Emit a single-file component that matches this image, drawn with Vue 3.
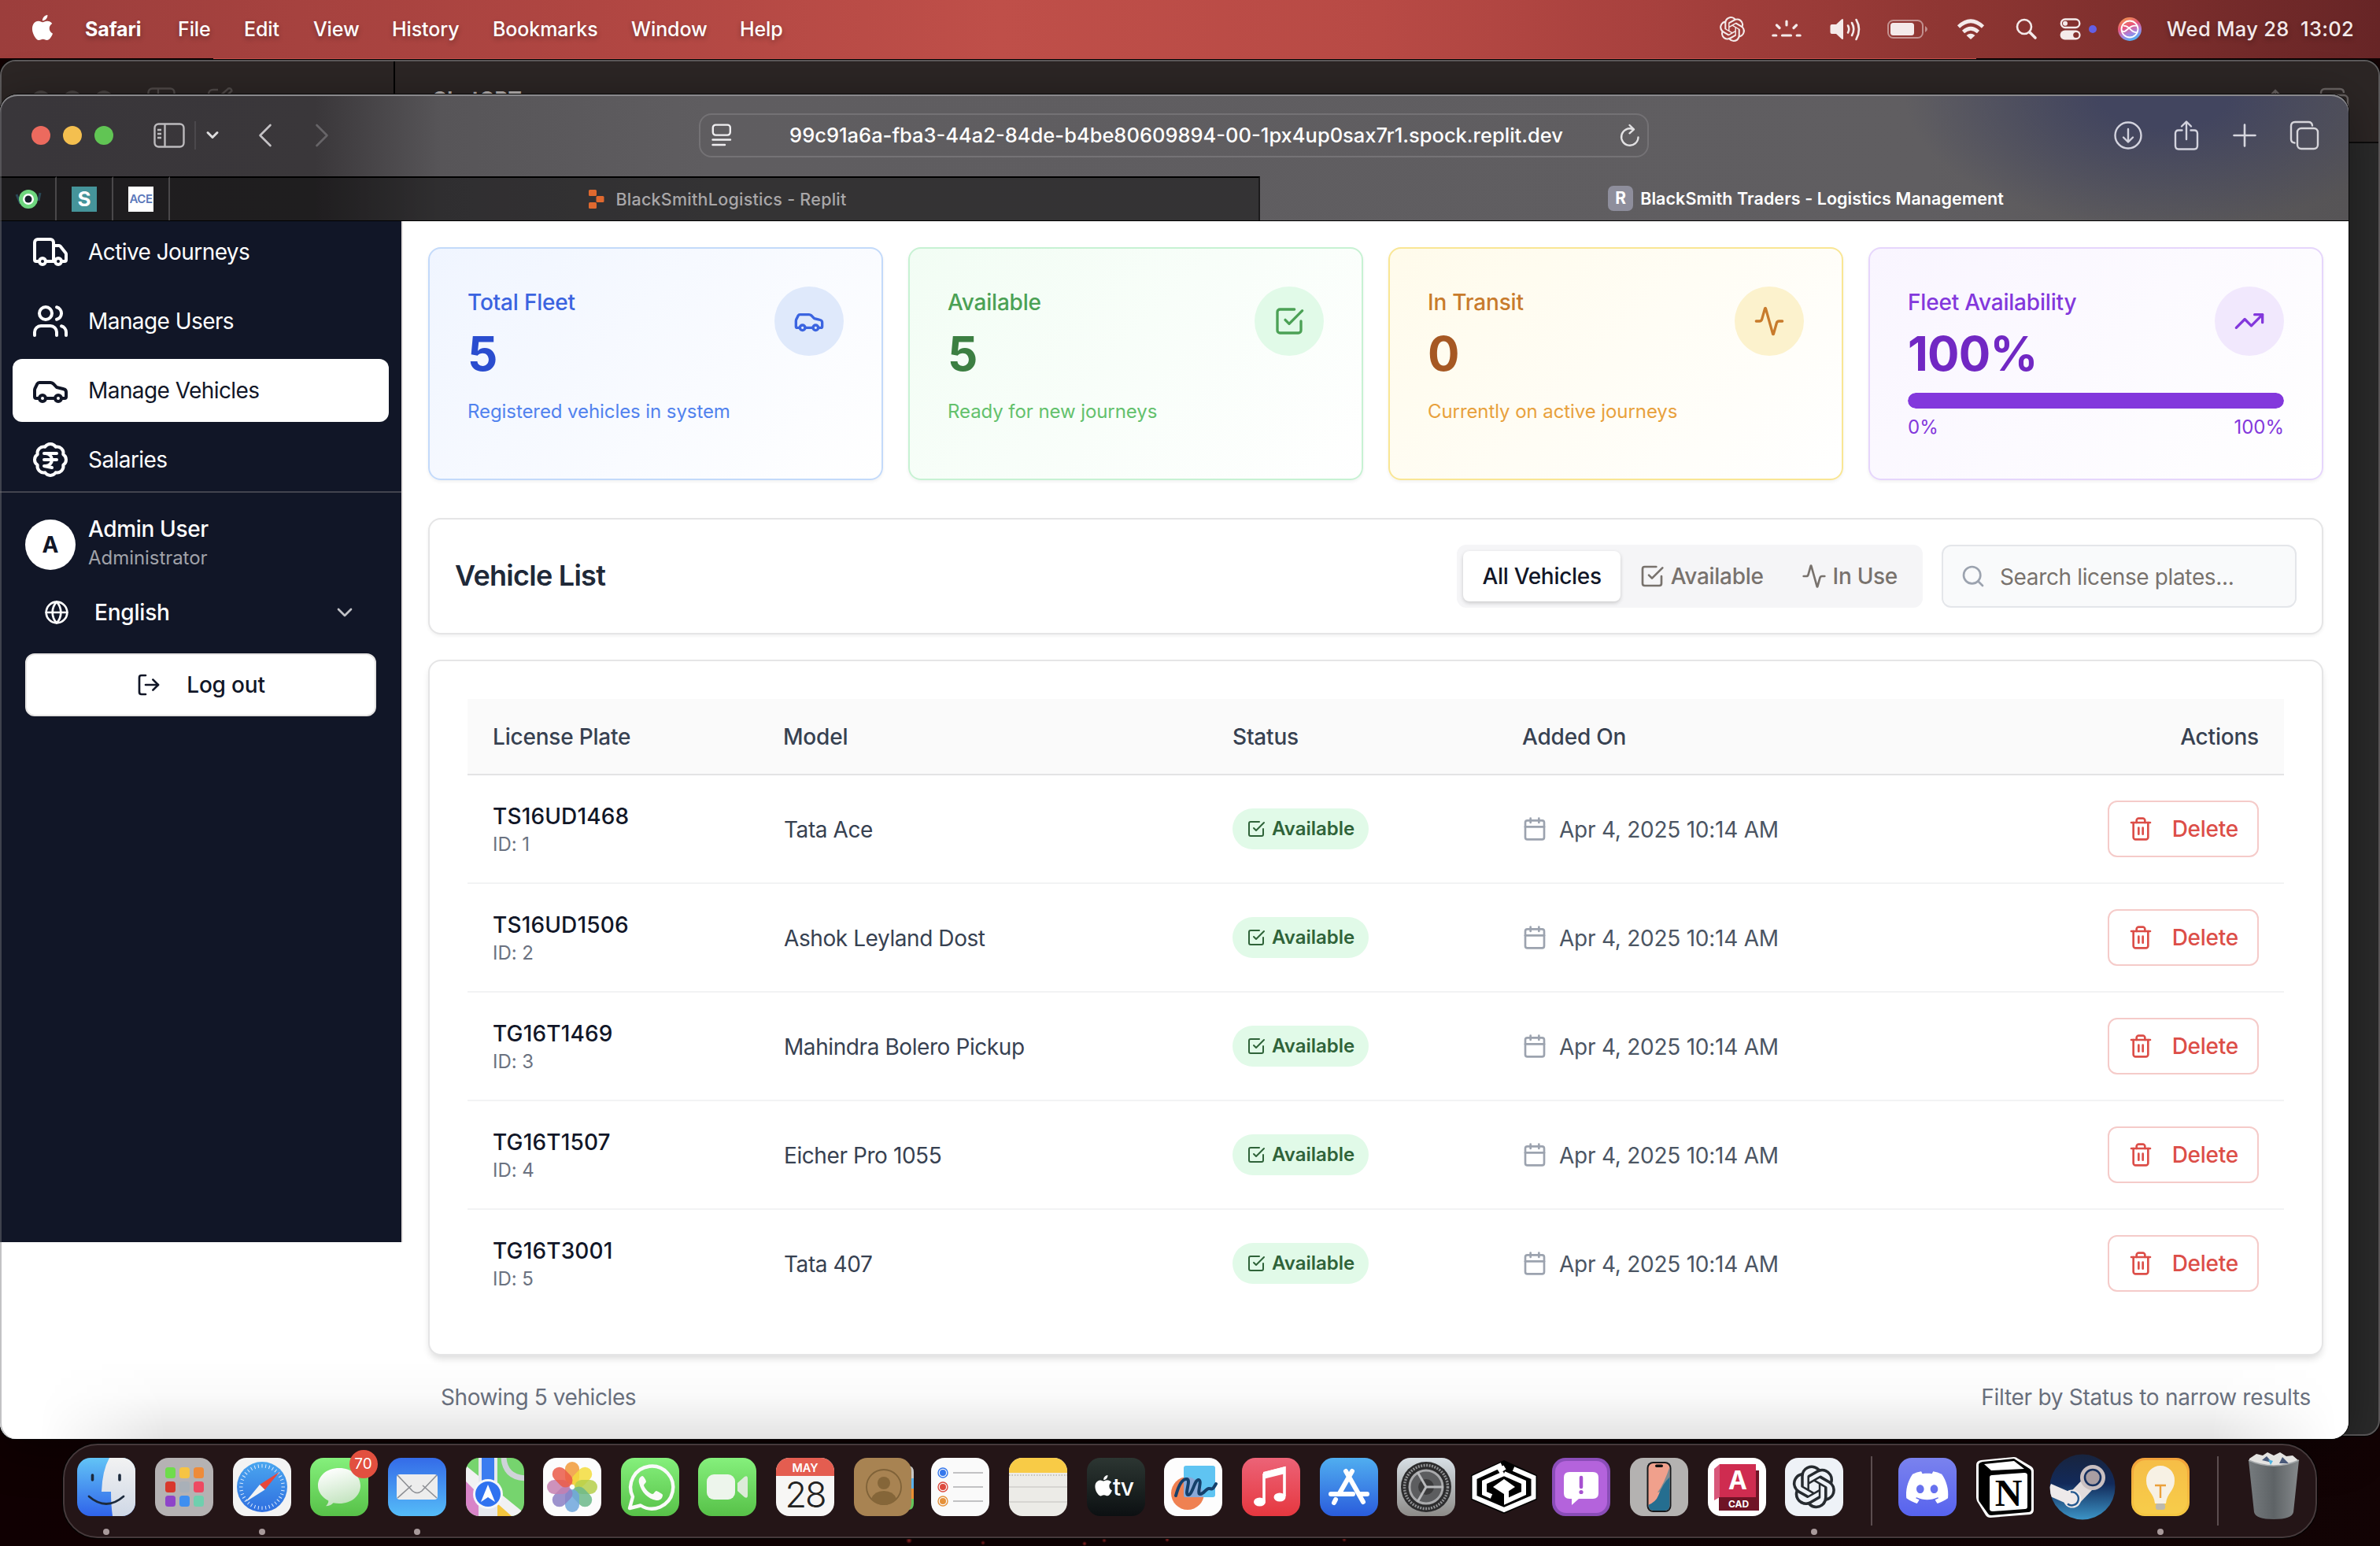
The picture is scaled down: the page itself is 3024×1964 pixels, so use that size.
<script setup>
import { h } from 'vue'

const circle = (x, y, r) => `M${x - r} ${y}a${r} ${r} 0 1 0 ${2 * r} 0a${r} ${r} 0 1 0 ${-2 * r} 0`

const iconPaths = {
  truck: ['M14 18V6a2 2 0 0 0-2-2H4a2 2 0 0 0-2 2v11a1 1 0 0 0 1 1h2', 'M15 18H9', 'M19 18h2a1 1 0 0 0 1-1v-3.65a1 1 0 0 0-.22-.624l-3.48-4.35A1 1 0 0 0 17.52 8H14', circle(17, 18, 2), circle(7, 18, 2)],
  users: ['M16 21v-2a4 4 0 0 0-4-4H6a4 4 0 0 0-4 4v2', circle(9, 7, 4), 'M22 21v-2a4 4 0 0 0-3-3.87', 'M16 3.13a4 4 0 0 1 0 7.75'],
  car: ['M19 17h2c.6 0 1-.4 1-1v-3c0-.9-.7-1.7-1.5-1.9C18.7 10.6 16 10 16 10s-1.3-1.4-2.2-2.3c-.5-.4-1.1-.7-1.8-.7H5c-.6 0-1.1.4-1.4.9l-1.4 2.9A3.7 3.7 0 0 0 2 12v4c0 .6.4 1 1 1h2', circle(7, 17, 2), 'M9 17h6', circle(17, 17, 2)],
  rupee: ['M3.85 8.62a4 4 0 0 1 4.78-4.77 4 4 0 0 1 6.74 0 4 4 0 0 1 4.78 4.78 4 4 0 0 1 0 6.74 4 4 0 0 1-4.77 4.78 4 4 0 0 1-6.75 0 4 4 0 0 1-4.78-4.77 4 4 0 0 1 0-6.76Z', 'M8 8h8', 'M8 12h8', 'm13 17-5-1h1a4 4 0 0 0 0-8'],
  globe: [circle(12, 12, 10), 'M12 2a14.5 14.5 0 0 0 0 20 14.5 14.5 0 0 0 0-20', 'M2 12h20'],
  chevron: ['m6 9 6 6 6-6'],
  logout: ['M9 21H5a2 2 0 0 1-2-2V5a2 2 0 0 1 2-2h4', 'M16 17l5-5-5-5', 'M21 12H9'],
  check: ['m9 11 3 3L22 4', 'M21 12v7a2 2 0 0 1-2 2H5a2 2 0 0 1-2-2V5a2 2 0 0 1 2-2h11'],
  activity: ['M22 12h-2.48a2 2 0 0 0-1.93 1.46l-2.35 8.36a.25.25 0 0 1-.48 0L9.24 2.18a.25.25 0 0 0-.48 0l-2.35 8.36A2 2 0 0 1 4.49 12H2'],
  trending: ['M22 7l-8.5 8.5-5-5L2 17', 'M16 7h6v6'],
  search: [circle(11, 11, 8), 'm21 21-4.3-4.3'],
  calendar: ['M8 2v4', 'M16 2v4', 'M5 4h14a2 2 0 0 1 2 2v14a2 2 0 0 1-2 2H5a2 2 0 0 1-2-2V6a2 2 0 0 1 2-2z', 'M3 10h18'],
  trash: ['M3 6h18', 'M19 6v14c0 1-1 2-2 2H7c-1 0-2-1-2-2V6', 'M8 6V4c0-1 1-2 2-2h4c1 0 2 1 2 2v2', 'M10 11v6', 'M14 11v6']
}

const LineIcon = (props) =>
  h('svg', {
    width: props.size, height: props.size, viewBox: '0 0 24 24', fill: 'none',
    stroke: 'currentColor', 'stroke-width': 2, 'stroke-linecap': 'round', 'stroke-linejoin': 'round'
  }, iconPaths[props.name].map((d) => h('path', { d })))
LineIcon.props = ['name', 'size']

const openai = 'M22.2819 9.8211a5.9847 5.9847 0 0 0-.5157-4.9108 6.0462 6.0462 0 0 0-6.5098-2.9A6.0651 6.0651 0 0 0 4.9807 4.1818a5.9847 5.9847 0 0 0-3.9977 2.9 6.0462 6.0462 0 0 0 .7427 7.0966 5.98 5.98 0 0 0 .511 4.9107 6.051 6.051 0 0 0 6.5146 2.9001A5.9847 5.9847 0 0 0 13.2599 24a6.0557 6.0557 0 0 0 5.7718-4.2058 5.9894 5.9894 0 0 0 3.9977-2.9001 6.0557 6.0557 0 0 0-.7475-7.0729zm-9.022 12.6081a4.4755 4.4755 0 0 1-2.8764-1.0408l.1419-.0804 4.7783-2.7582a.7948.7948 0 0 0 .3927-.6813v-6.7369l2.02 1.1686a.071.071 0 0 1 .038.052v5.5826a4.504 4.504 0 0 1-4.4945 4.4944zm-9.6607-4.1254a4.4708 4.4708 0 0 1-.5346-3.0137l.142.0852 4.783 2.7582a.7712.7712 0 0 0 .7806 0l5.8428-3.3685v2.3324a.0804.0804 0 0 1-.0332.0615L9.74 19.9502a4.4992 4.4992 0 0 1-6.1408-1.6464zM2.3408 7.8956a4.485 4.485 0 0 1 2.3655-1.9728V11.6a.7664.7664 0 0 0 .3879.6765l5.8144 3.3543-2.0201 1.1685a.0757.0757 0 0 1-.071 0l-4.8303-2.7865A4.504 4.504 0 0 1 2.3408 7.872zm16.5963 3.8558L13.1038 8.364 15.1192 7.2a.0757.0757 0 0 1 .071 0l4.8303 2.7913a4.4944 4.4944 0 0 1-.6765 8.1042v-5.6772a.79.79 0 0 0-.407-.667zm2.0107-3.0231l-.142-.0852-4.7735-2.7818a.7759.7759 0 0 0-.7854 0L9.409 9.2297V6.8974a.0662.0662 0 0 1 .0284-.0615l4.8303-2.7866a4.4992 4.4992 0 0 1 6.6802 4.66zM8.3065 12.863l-2.02-1.1638a.0804.0804 0 0 1-.038-.0567V6.0742a4.4992 4.4992 0 0 1 7.3757-3.4537l-.142.0805L8.704 5.459a.7948.7948 0 0 0-.3927.6813zm1.0976-2.3654l2.602-1.4998 2.6069 1.4998v2.9994l-2.5974 1.4997-2.6067-1.4997Z'
const apple = 'M12.152 6.896c-.948 0-2.415-1.078-3.96-1.04-2.04.027-3.91 1.183-4.961 3.014-2.117 3.675-.546 9.103 1.519 12.09 1.013 1.454 2.208 3.09 3.792 3.039 1.52-.065 2.09-.987 3.935-.987 1.831 0 2.35.987 3.96.948 1.637-.026 2.676-1.48 3.676-2.948 1.156-1.688 1.636-3.325 1.662-3.415-.039-.013-3.182-1.221-3.22-4.857-.026-3.04 2.48-4.494 2.597-4.559-1.429-2.09-3.623-2.324-4.39-2.376-2-.156-3.675 1.09-4.61 1.09zM15.53 3.83c.843-1.012 1.4-2.427 1.245-3.83-1.207.052-2.662.805-3.532 1.818-.78.896-1.454 2.338-1.273 3.714 1.338.104 2.715-.688 3.559-1.701'
const discord = 'M20.317 4.3698a19.7913 19.7913 0 00-4.8851-1.5152.0741.0741 0 00-.0785.0371c-.211.3753-.4447.8648-.6083 1.2495-1.8447-.2762-3.68-.2762-5.4868 0-.1636-.3933-.4058-.8742-.6177-1.2495a.077.077 0 00-.0785-.037 19.7363 19.7363 0 00-4.8852 1.515.0699.0699 0 00-.0321.0277C.5334 9.0458-.319 13.5799.0992 18.0578a.0824.0824 0 00.0312.0561c2.0528 1.5076 4.0413 2.4228 5.9929 3.0294a.0777.0777 0 00.0842-.0276c.4616-.6304.8731-1.2952 1.226-1.9942a.076.076 0 00-.0416-.1057c-.6528-.2476-1.2743-.5495-1.8722-.8923a.077.077 0 01-.0076-.1277c.1258-.0943.2517-.1923.3718-.2914a.0743.0743 0 01.0776-.0105c3.9278 1.7933 8.18 1.7933 12.0614 0a.0739.0739 0 01.0785.0095c.1202.099.246.1981.3728.2924a.077.077 0 01-.0066.1276 12.2986 12.2986 0 01-1.873.8914.0766.0766 0 00-.0407.1067c.3604.698.7719 1.3628 1.225 1.9932a.076.076 0 00.0842.0286c1.961-.6067 3.9495-1.5219 6.0023-3.0294a.077.077 0 00.0313-.0552c.5004-5.177-.8382-9.6739-3.5485-13.6604a.061.061 0 00-.0312-.0286zM8.02 15.3312c-1.1825 0-2.1569-1.0857-2.1569-2.419 0-1.3332.9555-2.4189 2.157-2.4189 1.2108 0 2.1757 1.0952 2.1568 2.419 0 1.3332-.9555 2.4189-2.1569 2.4189zm7.9748 0c-1.1825 0-2.1569-1.0857-2.1569-2.419 0-1.3332.9554-2.4189 2.1569-2.4189 1.2108 0 2.1757 1.0952 2.1568 2.419 0 1.3332-.946 2.4189-2.1568 2.4189Z'

const menus = [
  { label: 'File', width: 84 }, { label: 'Edit', width: 88 }, { label: 'View', width: 100 },
  { label: 'History', width: 128 }, { label: 'Bookmarks', width: 176 }, { label: 'Window', width: 138 }, { label: 'Help', width: 60 }
]

const nav = [
  { label: 'Active Journeys', icon: 'truck' },
  { label: 'Manage Users', icon: 'users' },
  { label: 'Manage Vehicles', icon: 'car', active: true },
  { label: 'Salaries', icon: 'rupee' }
]

const stats = [
  { tone: 'blue', label: 'Total Fleet', value: '5', note: 'Registered vehicles in system', icon: 'car' },
  { tone: 'green', label: 'Available', value: '5', note: 'Ready for new journeys', icon: 'check' },
  { tone: 'amber', label: 'In Transit', value: '0', note: 'Currently on active journeys', icon: 'activity' },
  { tone: 'purple', label: 'Fleet Availability', value: '100%', progress: 100, icon: 'trending' }
]

const vehicles = [
  { id: 1, plate: 'TS16UD1468', model: 'Tata Ace' },
  { id: 2, plate: 'TS16UD1506', model: 'Ashok Leyland Dost' },
  { id: 3, plate: 'TG16T1469', model: 'Mahindra Bolero Pickup' },
  { id: 4, plate: 'TG16T1507', model: 'Eicher Pro 1055' },
  { id: 5, plate: 'TG16T3001', model: 'Tata 407' }
]

const launchpad = ['#6fdc4c', '#f6c444', '#ee8b3a', '#d8382c', '#a9b0b8', '#ee4a62', '#8e44c9', '#3f8ff0', '#6fcfae']
const petals = ['#f19a38', '#f3dc3c', '#b5cf4a', '#6cb98a', '#6fa6dc', '#8b7fc4', '#c47fb0', '#ea5a48']
const spokes = [0, 1, 2]
const ticks = Array.from({ length: 36 }, (_, i) => i * 10)
</script>

<template>
  <div class="screen">
    <header class="menubar">
      <svg class="apple" width="32" height="32" viewBox="0 0 24 24" fill="#fff"><path :d="apple" /></svg>
      <b class="app-name">Safari</b>
      <span v-for="m in menus" :key="m.label" class="menu" :style="{ width: m.width + 'px' }">{{ m.label }}</span>
      <div class="tray">
        <svg width="32" height="32" viewBox="0 0 24 24" fill="#f4eaea"><path :d="openai" /></svg>
        <svg class="t-bright" width="38" height="26" viewBox="0 0 38 26" fill="none" stroke="#f4eaea" stroke-width="3.2" stroke-linecap="round"><path d="M19 3v5M6.500 8l3.500 3.500M31.500 8l-3.500 3.500M1.800 21h4M13.500 21h11M32.200 21h4" /></svg>
        <svg class="t-vol" width="40" height="30" viewBox="0 0 40 30" fill="none" stroke="#f4eaea" stroke-width="2.600" stroke-linecap="round"><path d="M2.500 9h5.500l7-6.500q2-1.500 2 1v23q0 2.500-2 1l-7-6.500H2.500Q.5 21 .5 19v-8Q.5 9 2.500 9z" fill="#f4eaea" stroke="none" /><path d="M23 10.500q2.500 4.500 0 9M28 7q4.500 8 0 16M33.500 3q7 12 0 25" /></svg>
        <svg class="t-bat" width="52" height="26" viewBox="0 0 52 26"><rect x="1" y="2" width="44" height="22" rx="6.500" fill="none" stroke="#f4eaea" stroke-opacity=".5" stroke-width="2" /><rect x="4" y="5" width="30" height="16" rx="3.500" fill="#f4eaea" /><path d="M48 9q6 4 0 8z" fill="#f4eaea" fill-opacity=".5" /></svg>
        <svg class="t-wifi" width="36" height="28" viewBox="0 0 36 28" fill="none" stroke="#f4eaea" stroke-width="4.600"><path d="M2.500 11q15.500-14.500 31 0M8.500 17.500q9.500-8.500 19 0" /><path d="M12.500 22q5.500-4.500 11 0L18 27z" fill="#f4eaea" stroke="none" /></svg>
        <svg class="t-search" width="28" height="28" viewBox="0 0 28 28" fill="none" stroke="#f4eaea" stroke-linecap="round"><circle cx="11" cy="11" r="9" stroke-width="2.600" /><path d="M18 18l7 7" stroke-width="3.600" /></svg>
        <svg class="t-cc" width="28" height="28" viewBox="0 0 28 28"><rect x="1.800" y="1.500" width="23.500" height="10.500" rx="5.200" fill="none" stroke="#f4eaea" stroke-width="2.400" /><circle cx="7" cy="6.700" r="3" fill="#f4eaea" /><rect x=".6" y="15.500" width="26" height="12" rx="6" fill="#f4eaea" /><circle cx="20.800" cy="21.500" r="3.600" fill="#84312f" /></svg>
        <i class="t-dot"></i>
        <svg class="t-siri" width="30" height="30" viewBox="0 0 30 30"><defs><linearGradient id="siri" x1=".2" y1="0" x2=".6" y2="1"><stop offset="0" stop-color="#f09a4c" /><stop offset=".4" stop-color="#e8567c" /><stop offset=".7" stop-color="#a884e0" /><stop offset="1" stop-color="#4ab4f4" /></linearGradient></defs><circle cx="15" cy="15" r="15" fill="url(#siri)" /><circle cx="15" cy="15" r="10.500" fill="none" stroke="#fff" stroke-width="1.800" /><path d="M5 17c6 5 8-9 20-6M7 11c8-2 9 10 18 8" fill="none" stroke="#fff" stroke-width="1.800" /></svg>
        <span class="clock">Wed May 28&nbsp; 13:02</span>
      </div>
    </header>

    <section class="back-window">
      <div class="back-head">
        <div class="back-left">
          <i></i><i></i><i></i>
          <svg class="b-side" width="36" height="30" viewBox="0 0 36 30" fill="none" stroke="#514b4a" stroke-width="2.400"><rect x="1.500" y="1.500" width="33" height="27" rx="5" /><path d="M14 2v26" /></svg>
          <svg class="b-edit" width="34" height="30" viewBox="0 0 34 30" fill="none" stroke="#514b4a" stroke-width="2.400"><path d="M14 3H8Q2 3 2 9v14q0 6 6 6h14q6 0 6-6v-6M12 19l2-6L27 1.500q4-1 4.500 3L18 17z" /></svg>
        </div>
        <span class="back-title">ChatGPT</span>
        <svg class="b-share" width="24" height="34" viewBox="0 0 24 34" fill="none" stroke="#6a6463" stroke-width="2.400"><path d="M12 24V2M5 9l7-7 7 7" /></svg>
        <svg class="b-tabs" width="38" height="38" viewBox="0 0 38 38" fill="none" stroke="#6a6463" stroke-width="2.400"><rect x="10" y="10" width="26" height="26" rx="5" /><path d="M6.500 28.500Q2 28 2 24V7q0-5 5-5h19q5 0 5 5" /></svg>
      </div>
    </section>

    <section class="window">
      <div class="chrome">
        <div class="toolbar">
          <div class="lights"><i class="l-red"></i><i class="l-yellow"></i><i class="l-green"></i></div>
          <svg class="i-side" width="40" height="32" viewBox="0 0 40 32" fill="none" stroke="#bcbabd" stroke-width="2.400"><rect x="1.500" y="1.500" width="37" height="29" rx="5" /><path d="M14.500 2v28M5 9h5M5 14h5M5 19h5" /></svg>
          <i class="tb-sep"></i>
          <svg class="i-chev" width="16" height="12" viewBox="0 0 16 12" fill="none" stroke="#dddcdd" stroke-width="3" stroke-linecap="round" stroke-linejoin="round"><path d="M2 2.500l6 6 6-6" /></svg>
          <svg class="i-back" width="18" height="30" viewBox="0 0 18 30" fill="none" stroke="#c4c2c5" stroke-width="2.600" stroke-linecap="round" stroke-linejoin="round"><path d="M15.500 2L2.500 15l13 13" /></svg>
          <svg class="i-fwd" width="18" height="30" viewBox="0 0 18 30" fill="none" stroke="#676568" stroke-width="2.600" stroke-linecap="round" stroke-linejoin="round"><path d="M2.500 2l13 13-13 13" /></svg>
          <div class="url">
            <svg width="26" height="30" viewBox="0 0 26 30" fill="none" stroke="#efeef0" stroke-width="2.400" stroke-linecap="round"><rect x="1.800" y="1.600" width="22" height="13" rx="3.500" /><path d="M1.500 20.500h22.500M1.500 27h15.500" /></svg>
            <span class="url-text">99c91a6a-fba3-44a2-84de-b4be80609894-00-1px4up0sax7r1.spock.replit.dev</span>
            <svg class="i-reload" width="26" height="30" viewBox="0 0 26 30" fill="none" stroke="#e2e1e3" stroke-width="2.400" stroke-linecap="round" stroke-linejoin="round"><path d="M23.500 17.500a10.700 10.700 0 1 1-7-10.500M12.500 2l5.500 5.300-5.500 5" /></svg>
          </div>
          <svg class="i-down" width="36" height="36" viewBox="0 0 36 36" fill="none" stroke="#d3d3de" stroke-width="2.400" stroke-linecap="round" stroke-linejoin="round"><circle cx="18" cy="18" r="16.500" /><path d="M18 10v16M12 20.500l6 6 6-6" /></svg>
          <svg class="i-share" width="32" height="40" viewBox="0 0 32 40" fill="none" stroke="#d3d3de" stroke-width="2.400" stroke-linecap="round" stroke-linejoin="round"><path d="M10.500 13.500H6q-4 0-4 4V33q0 4.500 4 4.500h20q4 0 4-4.500V17.500q0-4-4-4h-4.500M16 25V3M10 8.500l6-6 6 6" /></svg>
          <svg class="i-plus" width="30" height="30" viewBox="0 0 30 30" fill="none" stroke="#d6d6de" stroke-width="2.600" stroke-linecap="round"><path d="M15 1.500v27M1.500 15h27" /></svg>
          <svg class="i-tabs" width="38" height="38" viewBox="0 0 38 38" fill="none" stroke="#d6d5da" stroke-width="2.400" stroke-linecap="round"><rect x="10" y="10" width="26" height="26" rx="5" /><path d="M6.500 28.500Q2 28 2 24V7q0-5 5-5h17q4.500 0 5 4.500" /></svg>
        </div>
        <div class="tabbar">
          <div class="pin"><svg width="32" height="26" viewBox="0 0 32 26"><path d="M1 7l5 12M31 5l-2 10" stroke="#2a4856" stroke-width="3" /><circle cx="16" cy="13" r="12" fill="#6ed67e" /><circle cx="16" cy="13" r="7" fill="#fff" /><circle cx="16" cy="13" r="4.500" fill="#16202c" /></svg></div>
          <div class="pin"><span class="fav-s">S</span></div>
          <div class="pin"><span class="fav-ace">ACE</span></div>
          <div class="tab tab-idle">
            <svg width="20" height="24" viewBox="0 0 20 24" fill="#e0692f"><rect x="0" y="0" width="10" height="8" rx="1.500" /><rect x="9.500" y="8" width="10" height="8" rx="1.500" /><rect x="0" y="16" width="10" height="8" rx="1.500" /></svg>
            <span>BlackSmithLogistics - Replit</span>
          </div>
          <div class="tab tab-active"><i class="fav-r">R</i><span>BlackSmith Traders - Logistics Management</span></div>
        </div>
      </div>

      <div class="page">
        <aside class="sidebar">
          <nav class="nav">
            <a v-for="n in nav" :key="n.label" class="nav-item" :class="{ active: n.active }"><LineIcon :name="n.icon" size="48" /><span>{{ n.label }}</span></a>
          </nav>
          <div class="account">
            <div class="user">
              <span class="avatar">A</span>
              <div class="who"><span class="who-name">Admin User</span><span class="who-role">Administrator</span></div>
            </div>
            <div class="lang"><LineIcon name="globe" size="32" /><span>English</span><LineIcon name="chevron" size="32" class="lang-arrow" /></div>
            <button class="logout"><LineIcon name="logout" size="32" /><span>Log out</span></button>
          </div>
        </aside>

        <main class="main">
          <div class="stats">
            <article v-for="s in stats" :key="s.label" class="stat" :class="s.tone">
              <div class="stat-top">
                <div><div class="stat-label">{{ s.label }}</div><div class="stat-value">{{ s.value }}</div></div>
                <span class="stat-icon"><LineIcon :name="s.icon" size="40" /></span>
              </div>
              <div v-if="s.note" class="stat-note">{{ s.note }}</div>
              <div v-else class="meter">
                <div class="meter-track"><div class="meter-fill" :style="{ width: s.progress + '%' }"></div></div>
                <div class="meter-scale"><span>0%</span><span>100%</span></div>
              </div>
            </article>
          </div>

          <div class="list-head">
            <h2>Vehicle List</h2>
            <div class="segments">
              <span class="seg seg-on">All Vehicles</span>
              <span class="seg"><LineIcon name="check" size="32" />Available</span>
              <span class="seg"><LineIcon name="activity" size="32" />In Use</span>
            </div>
            <div class="search"><LineIcon name="search" size="32" /><span>Search license plates...</span></div>
          </div>

          <div class="table-card">
            <div class="row head"><span>License Plate</span><span>Model</span><span>Status</span><span>Added On</span><span class="right">Actions</span></div>
            <div v-for="v in vehicles" :key="v.id" class="row">
              <div class="plate"><span>{{ v.plate }}</span><small>ID: {{ v.id }}</small></div>
              <span class="model">{{ v.model }}</span>
              <div><span class="badge"><LineIcon name="check" size="24" />Available</span></div>
              <div class="date"><LineIcon name="calendar" size="32" /><span>Apr 4, 2025 10:14 AM</span></div>
              <div class="right"><button class="delete"><LineIcon name="trash" size="32" />Delete</button></div>
            </div>
          </div>

          <div class="foot"><span>Showing 5 vehicles</span><span>Filter by Status to narrow results</span></div>
        </main>
      </div>
      <div class="dock-shade"></div>
    </section>

    <footer class="dock">
      <div class="app running">
        <svg viewBox="0 0 74 74"><defs><linearGradient id="fi" x1="0" y1="0" x2="0" y2="1"><stop offset="0" stop-color="#62c4f6" /><stop offset="1" stop-color="#2f63ea" /></linearGradient><linearGradient id="fw" x1="0" y1="0" x2="0" y2="1"><stop offset="0" stop-color="#f2f2f2" /><stop offset="1" stop-color="#cfd8e6" /></linearGradient></defs><rect width="74" height="74" rx="17" fill="url(#fi)" /><path d="M41 0h16a17 17 0 0 1 17 17v40a17 17 0 0 1-17 17H45q-2-14-2-31H31Q32 16 41 0z" fill="url(#fw)" /><path d="M19.500 22v6M54 22v6" stroke="#1c2a3c" stroke-width="3.600" stroke-linecap="round" /><path d="M15 49q22 19 44 0" fill="none" stroke="#1c2a3c" stroke-width="2.800" stroke-linecap="round" /></svg>
      </div>
      <div class="app">
        <svg viewBox="0 0 74 74"><rect width="74" height="74" rx="17" fill="#b5b2b3" /><rect v-for="(c, i) in launchpad" :key="i" :x="13 + (i % 3) * 18" :y="12 + Math.floor(i / 3) * 18" width="13" height="14" rx="3.500" :fill="c" /></svg>
      </div>
      <div class="app running">
        <svg viewBox="0 0 74 74"><defs><linearGradient id="sf" x1="0" y1="0" x2="0" y2="1"><stop offset="0" stop-color="#4aa6ef" /><stop offset="1" stop-color="#2f6fe0" /></linearGradient></defs><rect width="74" height="74" rx="17" fill="#f3f3f3" /><circle cx="37" cy="37" r="32" fill="url(#sf)" /><g stroke="#dceafc" stroke-width="1"><path v-for="t in ticks" :key="t" d="M37 8v4.500" :transform="`rotate(${t} 37 37)`" /></g><path d="M59 18L40.500 40.500 34 34z" fill="#e8473b" /><path d="M16 56l18-22 6.500 6.500z" fill="#f3f3f3" /></svg>
      </div>
      <div class="app">
        <svg viewBox="0 0 74 74"><defs><linearGradient id="gr" x1="0" y1="0" x2="0" y2="1"><stop offset="0" stop-color="#85f07c" /><stop offset="1" stop-color="#57c148" /></linearGradient><linearGradient id="bub" x1=".3" y1="0" x2=".6" y2="1"><stop offset="0" stop-color="#fff" /><stop offset="1" stop-color="#c0e2bc" /></linearGradient></defs><rect width="74" height="74" rx="17" fill="url(#gr)" /><path d="M37 13c16 0 27 10 27 22.500S53 58 37 58c-2.500 0-5-.3-7.500-.8-2.500 2.500-5.500 4-9.500 4 2-2 3.500-4.200 3.300-6.700C15 50 10 43 10 35.500 10 23 21 13 37 13z" fill="url(#bub)" /></svg>
        <i class="badge-count">70</i>
      </div>
      <div class="app running">
        <svg viewBox="0 0 74 74"><defs><linearGradient id="ml" x1="0" y1="0" x2="0" y2="1"><stop offset="0" stop-color="#346be8" /><stop offset="1" stop-color="#55bcf8" /></linearGradient></defs><rect width="74" height="74" rx="17" fill="url(#ml)" /><rect x="11" y="21" width="52" height="32" rx="4" fill="#ededed" /><path d="M12 51l18-16M62 51L44 35M12 22l19 20q6 5 12 0l19-20" fill="none" stroke="#8d8f94" stroke-width="1.600" /></svg>
      </div>
      <div class="app">
        <svg viewBox="0 0 74 74"><defs><clipPath id="mp"><rect width="74" height="74" rx="17" /></clipPath></defs><g clip-path="url(#mp)"><rect width="74" height="74" fill="#76d46e" /><path d="M0 10l74 60v4H40L0 32z" fill="#f1f1f3" /><path d="M40 74V58l18 16z" fill="#f4c63f" /><path d="M0 30l16 16v28H0z" fill="#d884c8" /><path d="M16 0h24v74H16z" fill="#e6e8ee" /><path d="M20 0h16v40H20z" fill="#3b7cf0" /><path d="M48 0q2 26 30 26" fill="none" stroke="#cfd3d9" stroke-width="7" /></g><circle cx="28" cy="46" r="19" fill="#f4f6fa" /><circle cx="28" cy="46" r="16" fill="#2f72f0" /><path d="M28 34l9 22-9-6-9 6z" fill="#fff" /></svg>
      </div>
      <div class="app">
        <svg viewBox="0 0 74 74"><rect width="74" height="74" rx="17" fill="#fcfcfc" /><rect v-for="(c, i) in petals" :key="c" x="28" y="5" width="18" height="29" rx="9" :fill="c" fill-opacity=".85" :transform="`rotate(${i * 45} 37 37)`" /></svg>
      </div>
      <div class="app">
        <svg viewBox="0 0 74 74"><rect width="74" height="74" rx="17" fill="url(#gr)" /><path d="M11 64l4-14.500A27 27 0 1 1 25 60.500z" fill="none" stroke="#fafafa" stroke-width="4.400" stroke-linejoin="round" /><path d="M27 23c-3 1-5 4-4 9 3 12 11 20 22 22 4 .5 8-2 8-7 0-1-7-5-8-5-2 0-3 4-5 4-4-1-10-7-11-11 0-2 3-3 3-5 0-1-3-7-5-7z" fill="#fafafa" /></svg>
      </div>
      <div class="app">
        <svg viewBox="0 0 74 74"><rect width="74" height="74" rx="17" fill="url(#gr)" /><rect x="11" y="21" width="36" height="32" rx="9" fill="#edf5ec" /><path d="M50 32l9-8q4-2 4 2v22q0 4-4 2l-9-8z" fill="#dcebd9" /></svg>
      </div>
      <div class="app">
        <svg viewBox="0 0 74 74"><defs><clipPath id="cl"><rect width="74" height="74" rx="17" /></clipPath></defs><g clip-path="url(#cl)"><rect width="74" height="74" fill="#f7f6f5" /><rect width="74" height="23" fill="#e45d50" /></g><text x="37" y="17.500" text-anchor="middle" font-size="14.500" font-weight="600" fill="#fff">MAY</text><text x="37" y="63" text-anchor="middle" font-size="45" font-weight="300" fill="#222" letter-spacing="-2">28</text></svg>
      </div>
      <div class="app">
        <svg viewBox="0 0 74 74"><path d="M70 10q6 1 6 8v8h-6z" fill="#c8c8c8" /><path d="M70 26h6v13h-6z" fill="#59b2ee" /><path d="M70 39h6v13h-6z" fill="#ea8f32" /><path d="M70 52h6v6q0 7-6 8z" fill="#62c65a" /><rect width="73" height="74" rx="17" fill="#a88352" /><circle cx="38" cy="37" r="22" fill="none" stroke="#7f6238" stroke-width="1.800" /><circle cx="38" cy="32" r="8" fill="#856639" /><path d="M22 52q4-10 16-10t16 10q-6 8-16 8t-16-8z" fill="#856639" /></svg>
      </div>
      <div class="app">
        <svg viewBox="0 0 74 74"><rect width="74" height="74" rx="17" fill="#fafafa" /><g fill="none" stroke-width="1.400"><circle cx="15" cy="19" r="6" stroke="#3577ec" /><circle cx="15" cy="37" r="6" stroke="#dd4a3e" /><circle cx="15" cy="55" r="6" stroke="#e5913a" /></g><circle cx="15" cy="19" r="4" fill="#3577ec" /><circle cx="15" cy="37" r="4" fill="#dd4a3e" /><circle cx="15" cy="55" r="4" fill="#e5913a" /><path d="M28 19h38M28 37h38M28 55h38" stroke="#c2c2c4" stroke-width="2" /></svg>
      </div>
      <div class="app">
        <svg viewBox="0 0 74 74"><defs><clipPath id="nt"><rect width="74" height="74" rx="17" /></clipPath></defs><g clip-path="url(#nt)"><rect width="74" height="74" fill="#ecebe7" /><rect width="74" height="19" fill="#f8cb46" /><path d="M0 22h74" stroke="#b7b5ae" stroke-width="1.500" stroke-dasharray="1.500 2" /><path d="M0 37h74M0 56h74" stroke="#cfcecb" stroke-width="1.500" /></g></svg>
      </div>
      <div class="app">
        <svg viewBox="0 0 74 74"><defs><linearGradient id="tv" x1="0" y1="0" x2="0" y2="1"><stop offset="0" stop-color="#2c3632" /><stop offset="1" stop-color="#0c1012" /></linearGradient></defs><rect width="74" height="74" rx="17" fill="url(#tv)" /><g transform="translate(8 22) scale(1.100)" fill="#fff"><path :d="apple" /></g><text x="33" y="48" font-size="30" font-weight="500" fill="#fff" letter-spacing="-1">tv</text></svg>
      </div>
      <div class="app">
        <svg viewBox="0 0 74 74"><rect width="74" height="74" rx="17" fill="#fdfdfd" /><circle cx="30" cy="45" r="21" fill="#ef8152" /><rect x="25" y="10" width="40" height="40" rx="3" fill="#5fc4f2" /><path d="M25 26q12-6 22 11 3 6 3 13H28q-3 0-3-3z" fill="#89a9d8" /><path d="M15 48q6-22 14-21c6 1-4 20 2 20 5 0 8-20 13-19s-3 18 2 18 7-7 11-7 4 3 9-6" fill="none" stroke="#15406b" stroke-width="4" stroke-linecap="round" /></svg>
      </div>
      <div class="app">
        <svg viewBox="0 0 74 74"><defs><linearGradient id="mu" x1="0" y1="0" x2="0" y2="1"><stop offset="0" stop-color="#ec6377" /><stop offset="1" stop-color="#e6373f" /></linearGradient></defs><rect width="74" height="74" rx="17" fill="url(#mu)" /><path d="M28 20l26-7v36M28 20v35" fill="none" stroke="#fff" stroke-width="3.600" /><path d="M27 18l28-7v9l-28 7z" fill="#fff" /><ellipse cx="22.500" cy="56" rx="7.500" ry="5.500" fill="#fff" /><ellipse cx="48" cy="50" rx="7.500" ry="5.500" fill="#fff" /></svg>
      </div>
      <div class="app">
        <svg viewBox="0 0 74 74"><defs><linearGradient id="as" x1="0" y1="0" x2="0" y2="1"><stop offset="0" stop-color="#50aef0" /><stop offset="1" stop-color="#2a5cdc" /></linearGradient></defs><rect width="74" height="74" rx="17" fill="url(#as)" /><path d="M41 17L25 45M33 17l22 39M20 53l-2 4M14 46h28M51 46h9" stroke="#fff" stroke-width="6" stroke-linecap="round" /></svg>
      </div>
      <div class="app">
        <svg viewBox="0 0 74 74"><defs><linearGradient id="st" x1="0" y1="0" x2="0" y2="1"><stop offset="0" stop-color="#d7dfe5" /><stop offset="1" stop-color="#8d8b88" /></linearGradient></defs><rect width="74" height="74" rx="17" fill="url(#st)" /><circle cx="37" cy="37" r="32" fill="#2c2c2d" /><circle cx="37" cy="37" r="27.500" fill="none" stroke="#8f9092" stroke-width="3.500" stroke-dasharray="2 1.500" /><circle cx="37" cy="37" r="21" fill="#5c5d5f" stroke="#a9aaac" stroke-width="3" /><circle cx="37" cy="37" r="10" fill="#3b3b3c" /><path v-for="s in spokes" :key="s" d="M37 37h22" stroke="#b9babc" stroke-width="3" :transform="`rotate(${s * 120} 37 37)`" /></svg>
      </div>
      <div class="app">
        <svg viewBox="0 0 74 74"><path d="M37 3l42 19v31L37 71-5 53V22z" fill="#000" /><path d="M34 9L-.500 25v25L37 66l37.500-16V25L49 14M37 20L12 31v14l9 4M37 20l25 11v14L40 55V42M30 17l8-5" fill="none" stroke="#fff" stroke-width="6" /><path d="M37 27l14 10-14 9-14-9z" fill="#fff" /></svg>
      </div>
      <div class="app">
        <svg viewBox="0 0 74 74"><rect width="74" height="74" rx="17" fill="#8a4db8" /><rect x="4" y="4" width="66" height="66" rx="14" fill="#b463dc" /><path d="M22 18h30q7 0 7 7v20q0 7-7 7H34l-9 8v-8h-3q-7 0-7-7V25q0-7 7-7z" fill="#fff" /><path d="M37 25v12" stroke="#a651d0" stroke-width="4.500" stroke-linecap="round" /><circle cx="37" cy="43.500" r="2.600" fill="#a651d0" /></svg>
      </div>
      <div class="app">
        <svg viewBox="0 0 74 74"><defs><clipPath id="ph"><rect x="23.500" y="7" width="27" height="60" rx="6" /></clipPath></defs><rect width="74" height="74" rx="17" fill="#b4b2b1" /><rect x="21.500" y="5" width="31" height="64" rx="8" fill="#17191c" /><g clip-path="url(#ph)"><rect x="23" y="6" width="28" height="62" fill="#f0a08c" /><path d="M51 10q-8 24-16 34L51 40z" fill="#7f8c92" /><path d="M51 24Q42 32 36 48q-3 8-13 12v8h28z" fill="#256e90" /></g><rect x="32" y="8.500" width="10" height="3.500" rx="1.700" fill="#111" /></svg>
      </div>
      <div class="app">
        <svg viewBox="0 0 74 74"><rect width="74" height="74" rx="17" fill="#fff" /><path d="M8 14l7-6v42l-7 4z" fill="#d8577a" /><rect x="15" y="8" width="46" height="42" fill="#cf2c50" /><path d="M61 16h4v51H14V50h47z" fill="#6f1426" /><text x="38" y="40" text-anchor="middle" font-size="32" font-weight="700" fill="#fff">A</text><text x="39" y="62.500" text-anchor="middle" font-size="12" font-weight="700" fill="#fff">CAD</text></svg>
      </div>
      <div class="app running">
        <svg viewBox="0 0 74 74"><rect width="74" height="74" rx="17" fill="#eef2f7" /><g transform="translate(9.500 9.500) scale(2.280)" fill="#262b30"><path :d="openai" /></g></svg>
      </div>
      <i class="dock-sep"></i>
      <div class="app">
        <svg viewBox="0 0 74 74"><defs><linearGradient id="dc" x1="0" y1="0" x2="0" y2="1"><stop offset="0" stop-color="#7a82ee" /><stop offset="1" stop-color="#5763ee" /></linearGradient></defs><rect width="74" height="74" rx="17" fill="url(#dc)" /><g transform="translate(10 11) scale(2.220)" fill="#fff"><path :d="discord" /></g></svg>
      </div>
      <div class="app">
        <svg viewBox="0 0 74 74"><path d="M6 3L48-1q3 0 5 2l17 10q3 2 3 5v50q0 5-5 6l-50 4q-4 0-6-3L1 55q-1-3-1-5V9q0-5 6-6z" fill="#fff" /><path d="M8 5l40-4 20 13q2 1 2 4v47q0 4-4 4l-47 4q-3 0-4-2L5 57q-2-2-2-5V9q0-3 5-4z" fill="#000" /><path d="M10 8l38-4 13 10-42 2z" fill="#fff" /><path d="M17 25q0-3 3-3l41-3q4 0 4 3v40q0 3-3 3l-41 3q-4 0-4-3z" fill="#fff" /><text x="41" y="61" text-anchor="middle" class="serif" font-size="48" font-weight="700" fill="#000">N</text></svg>
      </div>
      <div class="app">
        <svg viewBox="0 0 74 74"><defs><linearGradient id="sm" x1="0" y1="0" x2="0" y2="1"><stop offset="0" stop-color="#18243e" /><stop offset=".45" stop-color="#122a5a" /><stop offset="1" stop-color="#3c94c6" /></linearGradient><clipPath id="sc"><circle cx="37" cy="37" r="41.500" /></clipPath></defs><circle cx="37" cy="37" r="41.500" fill="url(#sm)" /><g clip-path="url(#sc)"><path d="M-6 40L24 53" stroke="#eeeaea" stroke-width="15" /><path d="M26 52L50 27" stroke="#e2dcdc" stroke-width="18" /></g><circle cx="24" cy="52" r="11.500" fill="#eeeaea" /><circle cx="50" cy="25" r="16" fill="#c9bfc0" /><circle cx="50" cy="25" r="10" fill="#a99ea2" stroke="#16305f" stroke-width="2.600" /><path d="M22 43.500a8.500 8.500 0 1 1-4 15" fill="none" stroke="#24598f" stroke-width="2.400" /></svg>
      </div>
      <div class="app running">
        <svg viewBox="0 0 74 74"><defs><linearGradient id="tpb" x1="0" y1="0" x2="0" y2="1"><stop offset="0" stop-color="#f2a13a" /><stop offset="1" stop-color="#f5c842" /></linearGradient></defs><rect width="74" height="74" rx="17" fill="url(#tpb)" /><rect x="3" y="3" width="68" height="68" rx="15" fill="#f8d050" opacity=".6" /><path d="M37 10a18 18 0 0 1 18 19c0 13-10 16-11 29H30c-1-13-11-16-11-29A18 18 0 0 1 37 10z" fill="#f7f1e4" /><path d="M30 35h14M37 35v16" stroke="#eba03a" stroke-width="2.400" /><rect x="31" y="58" width="12" height="8" rx="3" fill="#bdb9ae" /></svg>
      </div>
      <i class="dock-sep"></i>
      <div class="app">
        <svg viewBox="0 0 74 74"><defs><linearGradient id="tr" x1="0" y1="0" x2="1" y2="0"><stop offset="0" stop-color="#767b7e" /><stop offset=".5" stop-color="#5e6366" /><stop offset="1" stop-color="#85898b" /></linearGradient></defs><path d="M6 1l9-6 8 2 6-4 8 4 8-4 8 5 8-1 7 6v8H6z" fill="#e4e3e1" /><path d="M22 3l6-5 7 8zM44 7l4-8 8 8z" fill="#4a5a7a" /><path d="M30 2l6 2-3 5z" fill="#4fb3e0" /><path d="M5 3q32 14 64 0l-7 66q-2 9-25 9T12 69z" fill="url(#tr)" /><path d="M5 3q32 14 64 0" fill="none" stroke="#a6aaac" stroke-width="1.500" /></svg>
      </div>
    </footer>
  </div>
</template>

<style>
body { background: #060102; }
</style>

<style scoped>
* { box-sizing: border-box; }
.screen {
  position: relative; width: 3024px; height: 1964px; overflow: hidden;
  font-family: Inter, "Liberation Sans", sans-serif; font-size: 28px; line-height: 40px;
  background:
    linear-gradient(#c9504b, #c9504b) 271px 74px / 2240px 1px no-repeat,
    radial-gradient(circle 4px at 1155px 1957px, #8f2322, transparent),
    radial-gradient(circle 3px at 1378px 1961px, #8f2322, transparent),
    radial-gradient(circle 3px at 1403px 1957px, #7a1d1d, transparent),
    radial-gradient(circle 3px at 1483px 1956px, #8f2322, transparent),
    radial-gradient(circle 3px at 1708px 1956px, #7a1d1d, transparent),
    radial-gradient(circle 3px at 1249px 1960px, #7a1d1d, transparent),
    linear-gradient(90deg, #100002, #0c0002 50%, #120304);
}
i { font-style: normal; }
svg { display: block; flex: none; overflow: visible; }
span, b { white-space: nowrap; }

.menubar {
  display: flex; align-items: center; height: 74px; padding-left: 38px; color: #fff;
  font-size: 25px; font-weight: 500; letter-spacing: -.1px; text-shadow: 0 3px 6px rgba(0, 0, 0, .3);
  background: linear-gradient(90deg, #9c3e3c, #b04642 25%, #bf4f49 42%, #b84a45 58%, #a8413e 69%, #8a3431 84%, #672526);
}
.apple { margin-top: -4px; }
.app-name { width: 118px; margin-left: 38px; font-weight: 700; }
.tray { display: flex; align-items: center; height: 74px; margin-left: auto; padding-right: 35px; color: #f4eaea; }
.t-bright { margin-left: 34px; }
.t-vol { margin-left: 36px; }
.t-bat { margin-left: 33px; }
.t-wifi { margin-left: 36px; }
.t-search { margin-left: 39px; }
.t-cc { margin-left: 28px; }
.t-dot { width: 10px; height: 10px; margin-left: 9px; border-radius: 50%; background: #635fe6; }
.t-siri { margin-left: 27px; }
.clock { width: 236px; margin-left: 32px; text-align: right; font-size: 25.500px; letter-spacing: .33px; }

.back-window {
  position: absolute; left: 0; top: 76px; width: 3024px; height: 1748px; border: 2px solid #5c595a;
  border-radius: 20px; background: #2a2a2a; box-shadow: 0 0 0 1px #000;
}
.back-head { display: flex; height: 104px; border-bottom: 2px solid #0c0b0b; border-radius: 18px 18px 0 0; background: #2c2625; }
.back-left { display: flex; gap: 16px; width: 500px; padding: 37px 0 0 38px; border-right: 2px solid #000; }
.back-left i { width: 24px; height: 24px; border-radius: 50%; background: #4a4544; }
.b-side { margin: -4px 0 0 27px; }
.b-edit { margin: -4px 0 0 24px; }
.back-title { margin: 28px 0 0 47px; color: #bbb6b5; font-size: 26px; font-weight: 700; }
.b-share { margin: 35px 0 0 auto; }
.b-tabs { margin: 33px 37px 0 44px; }

.window {
  position: absolute; left: 0; top: 120px; width: 2984px; height: 1708px; overflow: hidden;
  border-radius: 22px 22px 22px 20px; background: #fff; box-shadow: 0 0 0 1px #0a0a0a, 0 10px 60px rgba(0, 0, 0, .4);
}
.window::after { content: ""; position: absolute; inset: 0; border-radius: inherit; box-shadow: inset 0 2px #8a898c, inset 2px 0 rgba(120, 120, 124, .45); pointer-events: none; }
.chrome {
  height: 160px;
  background:
    radial-gradient(ellipse 330px 170px at 2750px 0, #42455f 25%, rgba(66, 69, 95, 0)),
    linear-gradient(90deg, #39363a, #3a373a 400px, #575558 560px, #5f5d60 900px, #605e61 2450px, #565456);
}
.toolbar { display: flex; align-items: center; height: 104px; padding-left: 40px; }
.lights { display: flex; gap: 16px; }
.lights i { width: 24px; height: 24px; border-radius: 50%; }
.l-red { background: #ec6a5e; }
.l-yellow { background: #f4bf4f; }
.l-green { background: #61c554; }
.i-side { margin-left: 51px; }
.tb-sep { width: 2px; height: 36px; margin-left: 12px; background: #4b484c; }
.i-chev { margin-left: 13px; }
.i-back { margin-left: 50px; }
.i-fwd { margin-left: 54px; }
.url { display: flex; align-items: center; width: 1207px; height: 56px; margin-left: 470px; padding: 0 9px 0 14px; border: 2px solid #747275; border-radius: 16px; color: #fff; }
.url-text { flex: 1; padding-left: 1px; text-align: center; font-size: 25.500px; font-weight: 500; letter-spacing: 0; }
.i-down { margin-left: 591px; }
.i-share { margin-left: 40px; }
.i-plus { margin-left: 43px; }
.i-tabs { margin-left: 42px; }

.tabbar { display: flex; height: 56px; font-size: 21.500px; font-weight: 500; }
.pin { display: flex; align-items: center; justify-content: center; width: 72px; border-top: 2px solid #000; border-right: 2px solid #4a484a; background: rgba(0, 0, 0, .46); }
.pin:first-child { padding-left: 2px; }
.fav-s { display: flex; align-items: center; justify-content: center; width: 32px; height: 32px; background: #45949a; color: #fff; font-size: 26px; font-weight: 700; }
.fav-ace { display: flex; align-items: center; justify-content: center; width: 32px; height: 32px; background: #fff; color: #5b79bb; font-size: 15px; font-weight: 600; letter-spacing: -.5px; }
.tab { display: flex; align-items: center; justify-content: center; gap: 14px; }
.tab-idle { width: 1385px; padding-left: 9px; border-top: 2px solid #000; border-right: 2px solid #1c1b1c; background: rgba(0, 0, 0, .45); color: #a9a7a9; letter-spacing: .25px; }
.tab-active { flex: 1; gap: 9px; padding-left: 4px; color: #fff; font-weight: 600; letter-spacing: .07px; }
.fav-r { display: flex; align-items: center; justify-content: center; width: 32px; height: 32px; border-radius: 7px; background: #8e8e9c; font-size: 21px; font-weight: 700; }

.page { display: flex; align-items: flex-start; height: 1548px; border-top: 1px solid #000; background: #fff; }
.sidebar { width: 510px; height: 1297px; background: #111627; color: #fff; box-shadow: 2px 0 #e7e3e2; clip-path: inset(0 -2px 0 0); }
.nav { display: flex; flex-direction: column; gap: 8px; padding: 0 16px; border-bottom: 2px solid #42444f; height: 346px; margin-top: -1px; letter-spacing: -.57px; }
.nav-item { display: flex; align-items: center; flex: none; gap: 24px; height: 80px; padding-left: 24px; border-radius: 12px; }
.nav-item.active { background: #fff; color: #111627; }
.account { padding: 32px; }
.user { display: flex; align-items: center; gap: 16px; height: 68px; }
.avatar { display: flex; align-items: center; justify-content: center; width: 64px; height: 64px; border-radius: 50%; background: #fff; color: #111627; font-weight: 700; }
.who { display: flex; flex-direction: column; margin-top: -5px; }
.who-name { font-weight: 500; line-height: 38px; letter-spacing: -.35px; }
.who-role { color: #a0a2a9; font-size: 24px; line-height: 35px; letter-spacing: -.05px; }
.lang { display: flex; align-items: center; height: 80px; margin-top: 12px; padding: 0 24px; font-weight: 500; letter-spacing: -.2px; }
.lang span { flex: 1; padding-left: 32px; }
.lang-arrow { color: #c0c1c6; }
.logout {
  display: flex; align-items: center; justify-content: center; gap: 32px; width: 446px; height: 80px; margin-top: 12px; padding: 0;
  border: 2px solid #e7e5e4; border-radius: 12px; background: #fff; color: #111627; font: 500 28px/40px Inter, sans-serif; letter-spacing: -.2px;
}

.main { width: 2474px; height: 1547px; padding: 33px 32px 0 34px; }
.dock-shade {
  position: absolute; left: 0; right: 0; bottom: 0; height: 100px; pointer-events: none;
  background: linear-gradient(rgba(0, 0, 0, 0), rgba(0, 0, 0, .02) 45%, rgba(0, 0, 0, .11));
  mask-image: linear-gradient(90deg, transparent 50px, #000 210px, #000 2810px, transparent 2970px);
}
.stats { display: grid; grid-template-columns: repeat(4, 1fr); gap: 32px; }
.stat { height: 296px; padding: 48px; border: 2px solid; border-radius: 16px; box-shadow: 0 2px 4px rgba(0, 0, 0, .06); }
.blue { border-color: #c3dafa; background: linear-gradient(135deg, #f0f5ff, #fff); color: #3b64e0; }
.green { border-color: #c7f2d3; background: linear-gradient(135deg, #f2fdf4, #fff); color: #4ba155; }
.amber { border-color: #f9e694; background: linear-gradient(135deg, #fffbeb, #fff); color: #c87b2c; }
.purple { border-color: #e6d6fc; background: linear-gradient(135deg, #f9f5ff, #fff); color: #8338dc; }
.stat-top { display: flex; align-items: flex-start; justify-content: space-between; height: 120px; }
.stat-icon { display: flex; align-items: center; justify-content: center; width: 88px; height: 88px; border-radius: 50%; }
.blue .stat-icon { background: #dfe9fb; }
.green .stat-icon { background: #e1fae8; }
.amber .stat-icon { background: #fcf2cd; }
.purple .stat-icon { background: #f1e8fd; }
.stat-label { font-weight: 500; letter-spacing: -.2px; }
.stat-value { margin-top: 9px; font-size: 60px; font-weight: 700; line-height: 72px; letter-spacing: -.8px; }
.blue .stat-value { color: #2a4dcf; }
.green .stat-value { color: #3c7f42; }
.amber .stat-value { color: #a65823; }
.purple .stat-value { color: #7128c3; }
.stat-note { margin-top: 23px; font-size: 24px; line-height: 32px; letter-spacing: -.08px; }
.blue .stat-note { color: #5182ee; }
.green .stat-note { color: #63c16c; }
.amber .stat-note { color: #e8a13c; }
.meter { padding-top: 15px; font-size: 24px; line-height: 32px; }
.meter-track { height: 20px; border-radius: 10px; background: #f1e8fd; overflow: hidden; }
.meter-fill { height: 20px; border-radius: 10px; background: #8338dc; }
.meter-scale { display: flex; justify-content: space-between; margin-top: 8px; }

.list-head { display: flex; align-items: center; height: 148px; margin-top: 48px; padding: 0 32px; border: 2px solid #e5e5e6; border-radius: 16px; background: #fff; box-shadow: 0 2px 4px rgba(0, 0, 0, .06); }
h2 { flex: 1; margin: -2px 0 0; color: #202938; font-size: 36px; font-weight: 600; letter-spacing: -.73px; }
.segments { display: flex; align-items: center; height: 80px; padding: 0 8px; border-radius: 12px; background: #f5f5f7; color: #78726d; font-weight: 500; letter-spacing: -.3px; }
.seg { display: flex; align-items: center; gap: 8px; height: 64px; padding: 0 24px; border-radius: 8px; }
.seg-on { background: #fff; color: #111627; box-shadow: 0 2px 5px rgba(0, 0, 0, .18); }
.search { display: flex; align-items: center; gap: 18px; width: 451px; height: 80px; margin-left: 24px; padding-left: 22px; border: 2px solid #e4e6ea; border-radius: 12px; background: #f9fafb; color: #78726d; letter-spacing: -.36px; }
.search span { margin-top: 2px; }
.search svg { color: #9ca3af; }

.table-card { height: 884px; margin-top: 32px; padding: 48px; border: 2px solid #e5e5e6; border-radius: 16px; background: #fff; box-shadow: 0 6px 10px -2px rgba(0, 0, 0, .14); color: #374151; }
.row { display: grid; grid-template-columns: 369px 571px 368px 1fr auto; align-items: center; height: 138px; padding: 0 32px; border-bottom: 2px solid #f2f3f4; }
.row:last-child { border-bottom: 0; height: 136px; }
.head { height: 97px; border-bottom: 2px solid #e3e3e4; background: #fafafa; font-weight: 500; letter-spacing: -.2px; }
.plate { display: flex; flex-direction: column; color: #111627; font-weight: 500; letter-spacing: .15px; }
.plate small { color: #6b7280; font-size: 24px; font-weight: 400; line-height: 32px; letter-spacing: -.05px; }
.model { padding: 1px 0 0 1px; letter-spacing: -.42px; }
.badge { display: inline-flex; align-items: center; gap: 8px; height: 52px; padding: 0 18px; border-radius: 26px; background: #e1fae8; color: #2f6339; font-size: 24px; font-weight: 600; vertical-align: middle; }
.date { display: flex; align-items: center; gap: 15px; color: #4b5563; letter-spacing: -.25px; }
.date span { padding-top: 1px; }
.date svg { color: #9ca3af; }
.right { text-align: right; }
.delete { display: flex; align-items: center; gap: 24px; height: 72px; padding: 0 24px; border: 2px solid #f5cbc9; border-radius: 12px; background: #fff; color: #dc4e48; font: 500 28px/40px Inter, sans-serif; letter-spacing: -.25px; }
.foot { display: flex; justify-content: space-between; padding: 33px 16px 0; color: #6b7280; letter-spacing: -.42px; }
.foot span:last-child { letter-spacing: -.28px; }

.dock {
  position: absolute; left: 80px; top: 1834px; display: flex; width: 2864px; height: 120px; padding: 16px 0 0 4px;
  border: 2px solid #46393b; border-radius: 44px; background: #241517; box-shadow: 0 0 0 1px #000;
}
.app { position: relative; flex: none; width: 98.650px; }
.app svg { width: 74px; height: 74px; margin: 0 auto; }
.app.running::after { content: ""; position: absolute; left: 50%; top: 90px; width: 8px; height: 8px; margin-left: -4px; border-radius: 50%; background: #a89a9b; }
.badge-count { position: absolute; top: -10px; right: 1px; width: 36px; height: 36px; border-radius: 50%; background: #e2503f; color: #fff; font-size: 19px; line-height: 36px; text-align: center; }
.dock-sep { flex: none; width: 2px; height: 88px; margin: -2px 20.500px 0 22.500px; background: #5b4d4f; }
.serif { font-family: "Liberation Serif", serif; }
</style>
